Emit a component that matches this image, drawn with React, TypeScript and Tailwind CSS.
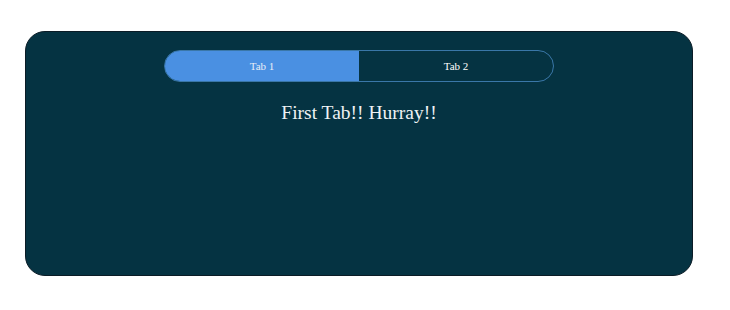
import React, { useState } from "react";

export default function App() {
  const [tab, setTab] = useState(0);
  return (
    <div className="w-[730px] h-[310px] bg-white pt-[31px] pl-[25px]" style={{ fontFamily: '"Liberation Serif", serif' }}>
      <div className="w-[668px] h-[245px] bg-[#053342] border border-[#0b1c26] rounded-[20px] flex flex-col items-center pt-[18px]">
        <div className="w-[390px] h-[32px] rounded-full border border-[#3a77a8] flex overflow-hidden">
          <button
            onClick={() => setTab(0)}
            className={`w-1/2 h-full text-[11px] ${tab === 0 ? "bg-[#4a90e2] text-[#e8eef6]" : "text-white"}`}
          >
            Tab 1
          </button>
          <button
            onClick={() => setTab(1)}
            className={`w-1/2 h-full text-[11px] ${tab === 1 ? "bg-[#4a90e2] text-[#e8eef6]" : "text-white"}`}
          >
            Tab 2
          </button>
        </div>
        <p className="mt-[19px] text-[19.5px] leading-[23px] text-[#eef2f4]">
          {tab === 0 ? "First Tab!! Hurray!!" : "Second Tab!! Hurray!!"}
        </p>
      </div>
    </div>
  );
}
